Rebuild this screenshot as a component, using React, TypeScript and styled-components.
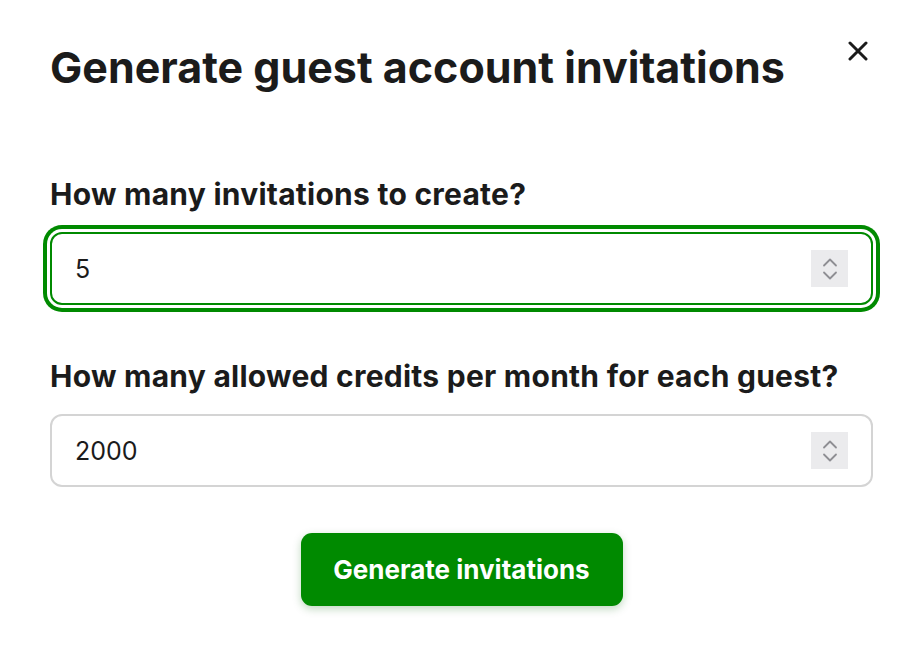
import React, { useState } from "react";
import styled, { createGlobalStyle } from "styled-components";

const GlobalStyle = createGlobalStyle`
  html, body {
    margin: 0;
    padding: 0;
    background: #ffffff;
  }
  body {
    font-family: Inter, "Noto Sans", sans-serif;
    color: #1b1b1b;
  }
`;

const Dialog = styled.div`
  width: 924px;
  height: 672px;
  box-sizing: border-box;
  padding: 41px 51px 0 50px;
  display: flex;
  flex-direction: column;
`;

const Header = styled.div`
  display: flex;
  justify-content: space-between;
  align-items: flex-start;
`;

const Title = styled.h1`
  margin: 0;
  font-size: 43px;
  font-weight: 700;
  line-height: 52px;
  color: #1b1b1b;
  white-space: nowrap;
`;

const CloseButton = styled.button`
  border: none;
  background: none;
  padding: 0;
  margin: 0 5px 0 0;
  width: 20px;
  height: 20px;
  display: flex;
  align-items: center;
  justify-content: center;
  cursor: pointer;
`;

const Form = styled.form`
  display: flex;
  flex-direction: column;
  margin-top: 83px;
`;

const Field = styled.div`
  display: flex;
  flex-direction: column;
  gap: 20px;
  margin-bottom: 53px;
`;

const Label = styled.label`
  font-size: 30px;
  font-weight: 700;
  line-height: 36px;
  letter-spacing: 0.25px;
  color: #1b1b1b;
  white-space: nowrap;
`;

const InputBox = styled.div<{ $focused: boolean }>`
  display: flex;
  align-items: center;
  height: 73px;
  box-sizing: border-box;
  border-radius: 12px;
  border: 2px solid ${(p) => (p.$focused ? "#008a00" : "#d4d4d4")};
  box-shadow: ${(p) =>
    p.$focused ? "0 0 0 3px #ffffff, 0 0 0 7px #008a00" : "none"};
  padding: 0 23px 0 23px;
  background: #fff;
`;

const NumberInput = styled.input`
  flex: 1;
  border: none;
  outline: none;
  background: transparent;
  font-family: Inter, "Noto Sans", sans-serif;
  font-size: 25px;
  color: #1b1b1b;
  padding: 0;
  -moz-appearance: textfield;
  &::-webkit-outer-spin-button,
  &::-webkit-inner-spin-button {
    -webkit-appearance: none;
    margin: 0;
  }
`;

const Spinner = styled.div`
  width: 37px;
  height: 37px;
  background: #ebebed;
  display: flex;
  flex-direction: column;
  align-items: center;
  justify-content: center;
  gap: 4px;
`;

const Actions = styled.div`
  display: flex;
  justify-content: center;
  margin-top: -7px;
`;

const PrimaryButton = styled.button`
  width: 322px;
  height: 73px;
  border: none;
  border-radius: 11px;
  background: #008a00;
  color: #ffffff;
  font-family: Inter, "Noto Sans", sans-serif;
  font-size: 26px;
  font-weight: 700;
  box-shadow: 0 3px 8px rgba(0, 100, 0, 0.25);
  cursor: pointer;
`;

const Chevron = ({ up }: { up?: boolean }) => (
  <svg width="16" height="9" viewBox="0 0 16 9">
    <path
      d={up ? "M2 7.5 L8 1.5 L14 7.5" : "M2 1.5 L8 7.5 L14 1.5"}
      fill="none"
      stroke="#8e8e93"
      strokeWidth="1.8"
      strokeLinecap="round"
      strokeLinejoin="round"
    />
  </svg>
);

function NumberField({
  label,
  value,
  focused,
}: {
  label: string;
  value: string;
  focused?: boolean;
}) {
  const [v, setV] = useState(value);
  return (
    <Field>
      <Label>{label}</Label>
      <InputBox $focused={!!focused}>
        <NumberInput
          type="number"
          value={v}
          onChange={(e) => setV(e.target.value)}
        />
        <Spinner>
          <Chevron up />
          <Chevron />
        </Spinner>
      </InputBox>
    </Field>
  );
}

export default function App() {
  return (
    <>
      <GlobalStyle />
      <Dialog>
        <Header>
          <Title>Generate guest account invitations</Title>
          <CloseButton aria-label="Close">
            <svg width="20" height="20" viewBox="0 0 20 20">
              <path
                d="M2 2 L18 18 M18 2 L2 18"
                stroke="#1b1b1b"
                strokeWidth="3"
                strokeLinecap="round"
              />
            </svg>
          </CloseButton>
        </Header>
        <Form onSubmit={(e) => e.preventDefault()}>
          <NumberField label="How many invitations to create?" value="5" focused />
          <NumberField
            label="How many allowed credits per month for each guest?"
            value="2000"
          />
          <Actions>
            <PrimaryButton type="submit">Generate invitations</PrimaryButton>
          </Actions>
        </Form>
      </Dialog>
    </>
  );
}
